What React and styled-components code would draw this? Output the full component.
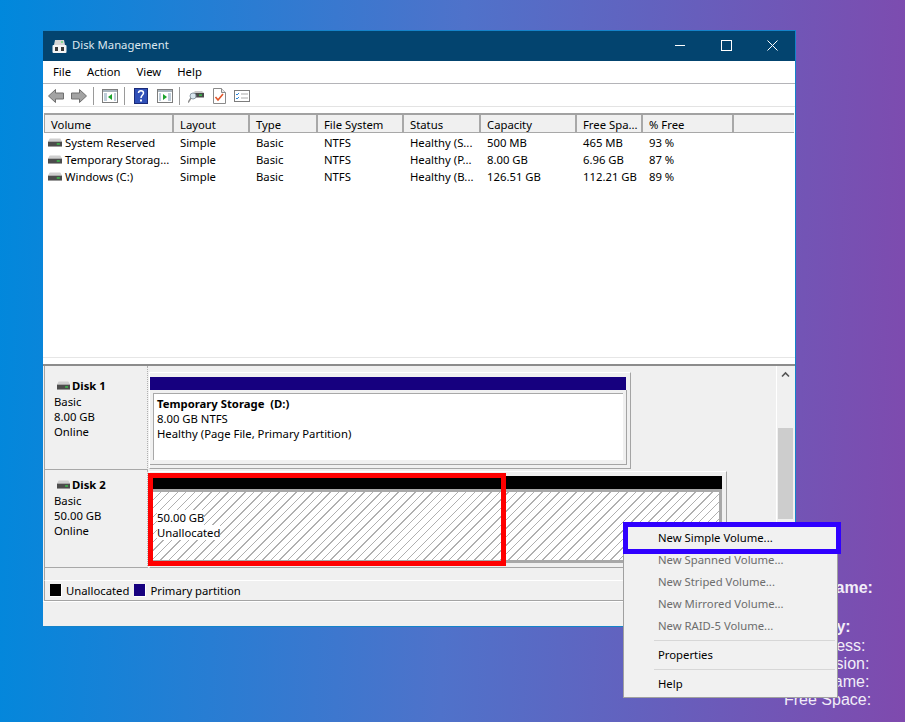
import React from "react";
import styled, { createGlobalStyle } from "styled-components";

const GlobalStyle = createGlobalStyle`
  html, body {
    margin: 0;
    padding: 0;
    background: #5a6cc6;
  }
`;

const uiFont = `"Noto Sans", "Open Sans", sans-serif`;
const columns = "129px 76px 68px 86px 77px 96px 66px 91px 60px";

const Page = styled.div`
  position: relative;
  width: 905px;
  height: 722px;
  overflow: hidden;
  display: flex;
  align-items: flex-start;
  padding: 30px 0 0 43px;
  box-sizing: border-box;
  background: linear-gradient(92deg, #0088dc 0%, #4f72ca 50%, #7f4aae 100%);
  font-family: ${uiFont};
  font-size: 11.3px;
  color: #000;
`;

const Window = styled.div`
  flex: none;
  width: 753px;
  height: 597px;
  box-sizing: border-box;
  border: 1px solid #1583c9;
  border-left: 0;
  display: flex;
  flex-direction: column;
  background: #f0f0f0;
`;

const TitleBar = styled.div`
  height: 30px;
  flex: none;
  display: flex;
  align-items: center;
  background: #03446f;
  color: #dbe7ef;
  padding-left: 9px;
`;

const TitleText = styled.span`
  margin-left: 5px;
  padding-bottom: 3px;
  flex: 1;
`;

const WinButton = styled.div`
  width: 46px;
  height: 30px;
  padding-bottom: 2px;
  box-sizing: border-box;
  display: flex;
  align-items: center;
  justify-content: center;
`;

const MenuBar = styled.div`
  height: 22px;
  flex: none;
  box-sizing: content-box;
  display: flex;
  align-items: center;
  padding-left: 2px;
  background: #fff;
  border-bottom: 1px solid #b4b4b8;
`;

const MenuLabel = styled.span`
  padding: 0 8px 2px;
`;

const ToolBar = styled.div`
  flex: none;
  display: flex;
  align-items: center;
  box-sizing: border-box;
  padding: 1px 0 0 5px;
  height: 23px;
  background: #fff;
  border-bottom: 1px solid #e3e3e3;
`;

const ToolIcon = styled.svg`
  flex: none;
  width: ${(p) => p.$w || 16}px;
  height: 16px;
  margin-left: ${(p) => p.$left || 0}px;
`;

const ToolSep = styled.div`
  width: 1px;
  height: 18px;
  background: #9a9a9a;
  margin-left: ${(p) => p.$left}px;
`;

const ListPane = styled.div`
  height: 251px;
  flex: none;
  background: #fff;
  padding: 6px 1px 0 1px;
  box-sizing: border-box;
  border-bottom: 1px solid #e6e6e6;
`;

const HeaderRow = styled.div`
  display: grid;
  grid-template-columns: ${columns};
  height: 17px;
  box-sizing: content-box;
  border-top: 2px solid #a2a2a2;
  border-bottom: 1px solid #a8a8a8;
  border-left: 1px solid #a2a2a2;
  background: #f0f0f0;
`;

const HeaderCell = styled.div`
  padding-left: 6px;
  line-height: 19px;
  border-right: 2px solid #a8a8a8;
  box-sizing: border-box;
  white-space: nowrap;
  overflow: hidden;
  &:last-child {
    border-right: 0;
  }
`;

const VolumeRow = styled.div`
  display: grid;
  grid-template-columns: ${columns};
  height: 17px;
  line-height: 17px;
  padding-left: 1px;
`;

const VolumeCell = styled.div`
  padding-left: 6px;
  white-space: nowrap;
  overflow: hidden;
`;

const NameCell = styled.div`
  display: flex;
  align-items: center;
  padding-left: 3px;
  white-space: nowrap;
`;

const RowsWrap = styled.div`
  padding-top: 1px;
`;

const Splitter = styled.div`
  height: 8px;
  flex: none;
  background: #fff;
  box-sizing: border-box;
  border-bottom: 2px solid #8c8c8c;
`;

const DiskPane = styled.div`
  height: 202px;
  flex: none;
  display: flex;
  margin-left: 1px;
  border-left: 1px solid #a4a4a4;
`;

const DiskList = styled.div`
  flex: 1;
  min-width: 0;
`;

const DiskRow = styled.div`
  display: flex;
  height: ${(p) => p.$h}px;
`;

const DiskLabel = styled.div`
  width: 103px;
  flex: none;
  padding: ${(p) => p.$top}px 0 0 9px;
  line-height: 15px;
  box-sizing: border-box;
  border-right: 1px dotted #b0b0b0;
  border-bottom: 1px solid #a8a8a8;
`;

const DiskName = styled.div`
  display: flex;
  align-items: center;
  font-weight: 700;
  margin: 0 0 1px 3px;
`;

const PartitionArea = styled.div`
  position: relative;
  flex: 1;
  padding: ${(p) => p.$top}px 0 0 1px;
`;

const PartitionFrame = styled.div`
  width: ${(p) => p.$w}px;
  height: 97px;
  box-sizing: border-box;
  border-top: 1px solid #fff;
  border-left: 1px solid #fff;
  border-right: 1px solid #a4a4a4;
  border-bottom: 1px solid #a4a4a4;
  padding: 4px 3px 0 0;
`;

const PartitionBar = styled.div`
  height: 13px;
  background: ${(p) => p.$color};
  margin-right: 1px;
`;

const PartitionWell = styled.div`
  height: 75px;
  box-sizing: border-box;
  padding: 3px 3px 4px;
  border-right: 1px solid #a4a4a4;
  border-bottom: 1px solid #a4a4a4;
`;

const PartitionBody = styled.div`
  height: 100%;
  box-sizing: border-box;
  line-height: 15px;
  border-top: 1px solid #a8a8a8;
  border-left: 1px solid #a8a8a8;
  background: #fff;
  padding: 2px 0 0 3px;
`;

const HatchBody = styled.div`
  height: 74px;
  box-sizing: border-box;
  margin-right: 1px;
  line-height: 15px;
  border: 3px solid #a8a8a8;
  padding: 18px 0 0 4px;
  background: repeating-linear-gradient(135deg, #fff 0 5px, #b0b0b0 5px 6px);
`;

const HatchLabel = styled.div`
  width: fit-content;
  background: #fff;
`;

const VolumeTitle = styled.div`
  font-weight: 700;
`;

const RedBox = styled.div`
  position: absolute;
  left: 0;
  top: 3px;
  width: 358px;
  height: 93px;
  box-sizing: border-box;
  border: 5px solid #ff0000;
`;

const ScrollBar = styled.div`
  width: 17px;
  flex: none;
  margin-right: 2px;
  display: flex;
  flex-direction: column;
  align-items: center;
  box-sizing: border-box;
  border-left: 1px solid #fff;
  padding-top: 5px;
`;

const ScrollThumb = styled.div`
  width: 15px;
  height: 91px;
  margin-top: 50px;
  background: #cdcdcd;
`;

const SpacerBand = styled.div`
  height: 12px;
  flex: none;
  margin-left: 1px;
  border-left: 1px solid #a4a4a4;
  border-bottom: 1px solid #fff;
`;

const Legend = styled.div`
  height: 19px;
  flex: none;
  display: flex;
  align-items: center;
  margin-left: 1px;
  padding-left: 5px;
  border-left: 1px solid #a4a4a4;
  border-bottom: 1px solid #a4a4a4;
`;

const LegendSwatch = styled.span`
  width: 11px;
  height: 12px;
  background: ${(p) => p.$color};
  border-right: 1px solid #fff;
  border-bottom: 1px solid #fff;
  margin-right: 4px;
`;

const LegendText = styled.span`
  margin-right: 5px;
`;

const StatusBar = styled.div`
  flex: 1;
  border-top: 1px solid #fff;
`;

const InfoBlock = styled.div`
  flex: none;
  margin: 549px 0 0 -12px;
  font-family: "Liberation Sans", Arial, sans-serif;
  font-size: 16px;
  line-height: 18.3px;
  color: #f1edf8;
  white-space: nowrap;
`;

const InfoHead = styled.div`
  font-weight: 700;
  margin-bottom: ${(p) => p.$gap || 0}px;
`;

const ContextMenu = styled.div`
  position: absolute;
  left: 623px;
  top: 522px;
  width: 215px;
  height: 176px;
  box-sizing: border-box;
  padding-top: 4px;
  border: 1px solid #a0a0a0;
  background: #f1f1f1;
`;

const MenuItem = styled.div`
  position: relative;
  height: 22px;
  line-height: 22px;
  padding-left: 34px;
  color: ${(p) => (p.$disabled ? "#6d6d6d" : "#000")};
`;

const MenuSep = styled.div`
  height: 1px;
  margin: 3px 2px 3px 30px;
  background: #d7d7d7;
`;

const BlueBox = styled.div`
  position: absolute;
  left: -1px;
  top: -5px;
  width: 218px;
  height: 32px;
  box-sizing: border-box;
  border: 5px solid #3000ff;
`;

const DriveSvg = styled.svg`
  flex: none;
  width: ${(p) => p.$w}px;
  height: 9px;
  margin-right: ${(p) => p.$gap}px;
`;

const DriveIcon = ({ w = 14, gap = 3 }) => (
  <DriveSvg $w={w} $gap={gap} viewBox="0 0 16 10" preserveAspectRatio="none">
    <path d="M2 0.5h12l2 3.5H0z" fill="#cfcfcf" />
    <rect x="0" y="4" width="16" height="5.5" fill="#4c4c4c" />
    <rect x="10" y="6" width="3.5" height="1.3" fill="#35e04a" />
  </DriveSvg>
);

const arrowProps = { fill: "#a3a3a3", stroke: "#6f6f6f", strokeWidth: 1 };

const Toolbar = () => (
  <ToolBar>
    <ToolIcon viewBox="0 0 16 16">
      <path d="M0.5 8l7-6.5v3.5h8v6h-8v3.5z" {...arrowProps} />
    </ToolIcon>
    <ToolIcon viewBox="0 0 16 16" $left={7}>
      <path d="M15.5 8l-7-6.5v3.5h-8v6h8v3.5z" {...arrowProps} />
    </ToolIcon>
    <ToolSep $left={6} />
    <ToolIcon viewBox="0 0 16 16" $left={8}>
      <rect x="0.5" y="1.5" width="15" height="13" fill="#fff" stroke="#7d7d7d" />
      <rect x="1" y="2" width="14" height="2" fill="#a9b4bd" />
      <path d="M2 6h3M2 8h3M2 10h3M2 12h3M12 6h2M12 8h2M12 10h2M12 12h2" stroke="#7f9cb5" />
      <path d="M10 6v6L6 9z" fill="#1ba32d" />
    </ToolIcon>
    <ToolSep $left={6} />
    <ToolIcon viewBox="0 0 14 16" $w={14} $left={9}>
      <rect x="0.5" y="0.5" width="13" height="15" fill="#3050b8" stroke="#1a2a78" />
      <path d="M4.5 5c0-3 5-3 5 0 0 2-2.5 2-2.5 5" fill="none" stroke="#fff" strokeWidth="1.5" />
      <rect x="6" y="11.5" width="2" height="2" fill="#fff" />
    </ToolIcon>
    <ToolIcon viewBox="0 0 16 16" $left={9}>
      <rect x="0.5" y="1.5" width="15" height="13" fill="#fff" stroke="#7d7d7d" />
      <rect x="1" y="2" width="14" height="2" fill="#a9b4bd" />
      <path d="M2 6h2M2 8h2M2 10h2M2 12h2M11 6h3M11 8h3M11 10h3M11 12h3" stroke="#7f9cb5" />
      <path d="M6 6v6l4-3z" fill="#1ba32d" />
    </ToolIcon>
    <ToolSep $left={6} />
    <ToolIcon viewBox="0 0 16 16" $left={8}>
      <path d="M5 5h11v4.5H5z" fill="#4a4a4a" />
      <path d="M5 5l2-2h7l2 2z" fill="#c9c9c9" />
      <rect x="11" y="6.5" width="3" height="1.2" fill="#35e04a" />
      <circle cx="5" cy="8" r="3" fill="#d9e6ee" stroke="#8a9aa6" />
      <path d="M3 10l-3 4.5" stroke="#8a8a8a" strokeWidth="1.5" />
    </ToolIcon>
    <ToolIcon viewBox="0 0 13 16" $w={13} $left={9}>
      <path d="M0.5 0.5h8l4 4v11h-12z" fill="#fff" stroke="#8a8a8a" />
      <path d="M8.5 0.5v4h4" fill="#e8e8e8" stroke="#8a8a8a" />
      <path d="M2.5 9l2.5 3 5-6" fill="none" stroke="#e2562a" strokeWidth="1.6" />
    </ToolIcon>
    <ToolIcon viewBox="0 0 16 16" $left={8}>
      <rect x="0.5" y="2.5" width="15" height="11" fill="#fff" stroke="#7d7d7d" />
      <path d="M2 6l1 1 2-2M2 10l1 1 2-2" fill="none" stroke="#2a86d8" />
      <path d="M7 6h7M7 10h7" stroke="#a9a9a9" />
    </ToolIcon>
  </ToolBar>
);

const headers = ["Volume", "Layout", "Type", "File System", "Status", "Capacity", "Free Spa...", "% Free", ""];

const volumes = [
  ["System Reserved", "Simple", "Basic", "NTFS", "Healthy (S...", "500 MB", "465 MB", "93 %"],
  ["Temporary Storag...", "Simple", "Basic", "NTFS", "Healthy (P...", "8.00 GB", "6.96 GB", "87 %"],
  ["Windows (C:)", "Simple", "Basic", "NTFS", "Healthy (B...", "126.51 GB", "112.21 GB", "89 %"],
];

const greyedItems = ["New Spanned Volume...", "New Striped Volume...", "New Mirrored Volume...", "New RAID-5 Volume..."];

const App = () => (
  <Page>
    <GlobalStyle />
    <Window>
      <TitleBar>
        <svg width="15" height="15" viewBox="0 0 15 15" style={{ flex: "none" }}>
          <path d="M3 1h9l1 5H2z" fill="#d6d6d6" />
          <rect x="9" y="2.5" width="2" height="1" fill="#35e04a" />
          <rect x="0.5" y="6" width="14" height="8" rx="1" fill="#f4f4f4" />
          <rect x="3" y="8" width="3" height="4" fill="#3a3a3a" />
          <rect x="9" y="8" width="3" height="4" fill="#3a3a3a" />
        </svg>
        <TitleText>Disk Management</TitleText>
        <WinButton>
          <svg width="11" height="11" viewBox="0 0 11 11">
            <path d="M0 5.5h10" stroke="#fff" />
          </svg>
        </WinButton>
        <WinButton>
          <svg width="11" height="11" viewBox="0 0 11 11">
            <rect x="0.5" y="0.5" width="10" height="10" fill="none" stroke="#fff" />
          </svg>
        </WinButton>
        <WinButton>
          <svg width="11" height="11" viewBox="0 0 11 11">
            <path d="M0.5 0.5l10 10M10.5 0.5l-10 10" stroke="#fff" />
          </svg>
        </WinButton>
      </TitleBar>

      <MenuBar>
        <MenuLabel>File</MenuLabel>
        <MenuLabel>Action</MenuLabel>
        <MenuLabel>View</MenuLabel>
        <MenuLabel>Help</MenuLabel>
      </MenuBar>

      <Toolbar />

      <ListPane>
        <HeaderRow>
          {headers.map((h, i) => (
            <HeaderCell key={i}>{h}</HeaderCell>
          ))}
        </HeaderRow>
        <RowsWrap>
          {volumes.map((row) => (
            <VolumeRow key={row[0]}>
              <NameCell>
                <DriveIcon />
                {row[0]}
              </NameCell>
              {row.slice(1).map((cell, i) => (
                <VolumeCell key={i}>{cell}</VolumeCell>
              ))}
            </VolumeRow>
          ))}
        </RowsWrap>
      </ListPane>

      <Splitter />

      <DiskPane>
        <DiskList>
          <DiskRow $h={104}>
            <DiskLabel $top={12}>
              <DiskName>
                <DriveIcon w={13} gap={2} />
                Disk 1
              </DiskName>
              <div>Basic</div>
              <div>8.00 GB</div>
              <div>Online</div>
            </DiskLabel>
            <PartitionArea $top={6}>
              <PartitionFrame $w={482}>
                <PartitionBar $color="#16007f" />
                <PartitionWell>
                  <PartitionBody>
                    <VolumeTitle>Temporary Storage&nbsp; (D:)</VolumeTitle>
                    <div>8.00 GB NTFS</div>
                    <div>Healthy (Page File, Primary Partition)</div>
                  </PartitionBody>
                </PartitionWell>
              </PartitionFrame>
            </PartitionArea>
          </DiskRow>
          <DiskRow $h={98}>
            <DiskLabel $top={7}>
              <DiskName>
                <DriveIcon w={13} gap={2} />
                Disk 2
              </DiskName>
              <div>Basic</div>
              <div>50.00 GB</div>
              <div>Online</div>
            </DiskLabel>
            <PartitionArea $top={1}>
              <PartitionFrame $w={578}>
                <PartitionBar $color="#000" />
                <HatchBody>
                  <HatchLabel>50.00 GB</HatchLabel>
                  <HatchLabel>Unallocated</HatchLabel>
                </HatchBody>
              </PartitionFrame>
              <RedBox />
            </PartitionArea>
          </DiskRow>
        </DiskList>
        <ScrollBar>
          <svg width="9" height="7" viewBox="0 0 9 7">
            <path d="M1 5.5l3.5-3.5 3.5 3.5" fill="none" stroke="#555" strokeWidth="1.6" />
          </svg>
          <ScrollThumb />
        </ScrollBar>
      </DiskPane>

      <SpacerBand />

      <Legend>
        <LegendSwatch $color="#000" />
        <LegendText>Unallocated</LegendText>
        <LegendSwatch $color="#16007f" />
        <LegendText>Primary partition</LegendText>
      </Legend>

      <StatusBar />
    </Window>

    <InfoBlock>
      <InfoHead $gap={21}>Host Name:</InfoHead>
      <InfoHead>Memory:</InfoHead>
      <div>IP Address:</div>
      <div>OS Version:</div>
      <div>User Name:</div>
      <div>Free Space:</div>
    </InfoBlock>

    <ContextMenu>
      <MenuItem>
        New Simple Volume...
        <BlueBox />
      </MenuItem>
      {greyedItems.map((label) => (
        <MenuItem key={label} $disabled>
          {label}
        </MenuItem>
      ))}
      <MenuSep />
      <MenuItem>Properties</MenuItem>
      <MenuSep />
      <MenuItem>Help</MenuItem>
    </ContextMenu>
  </Page>
);

export default App;
